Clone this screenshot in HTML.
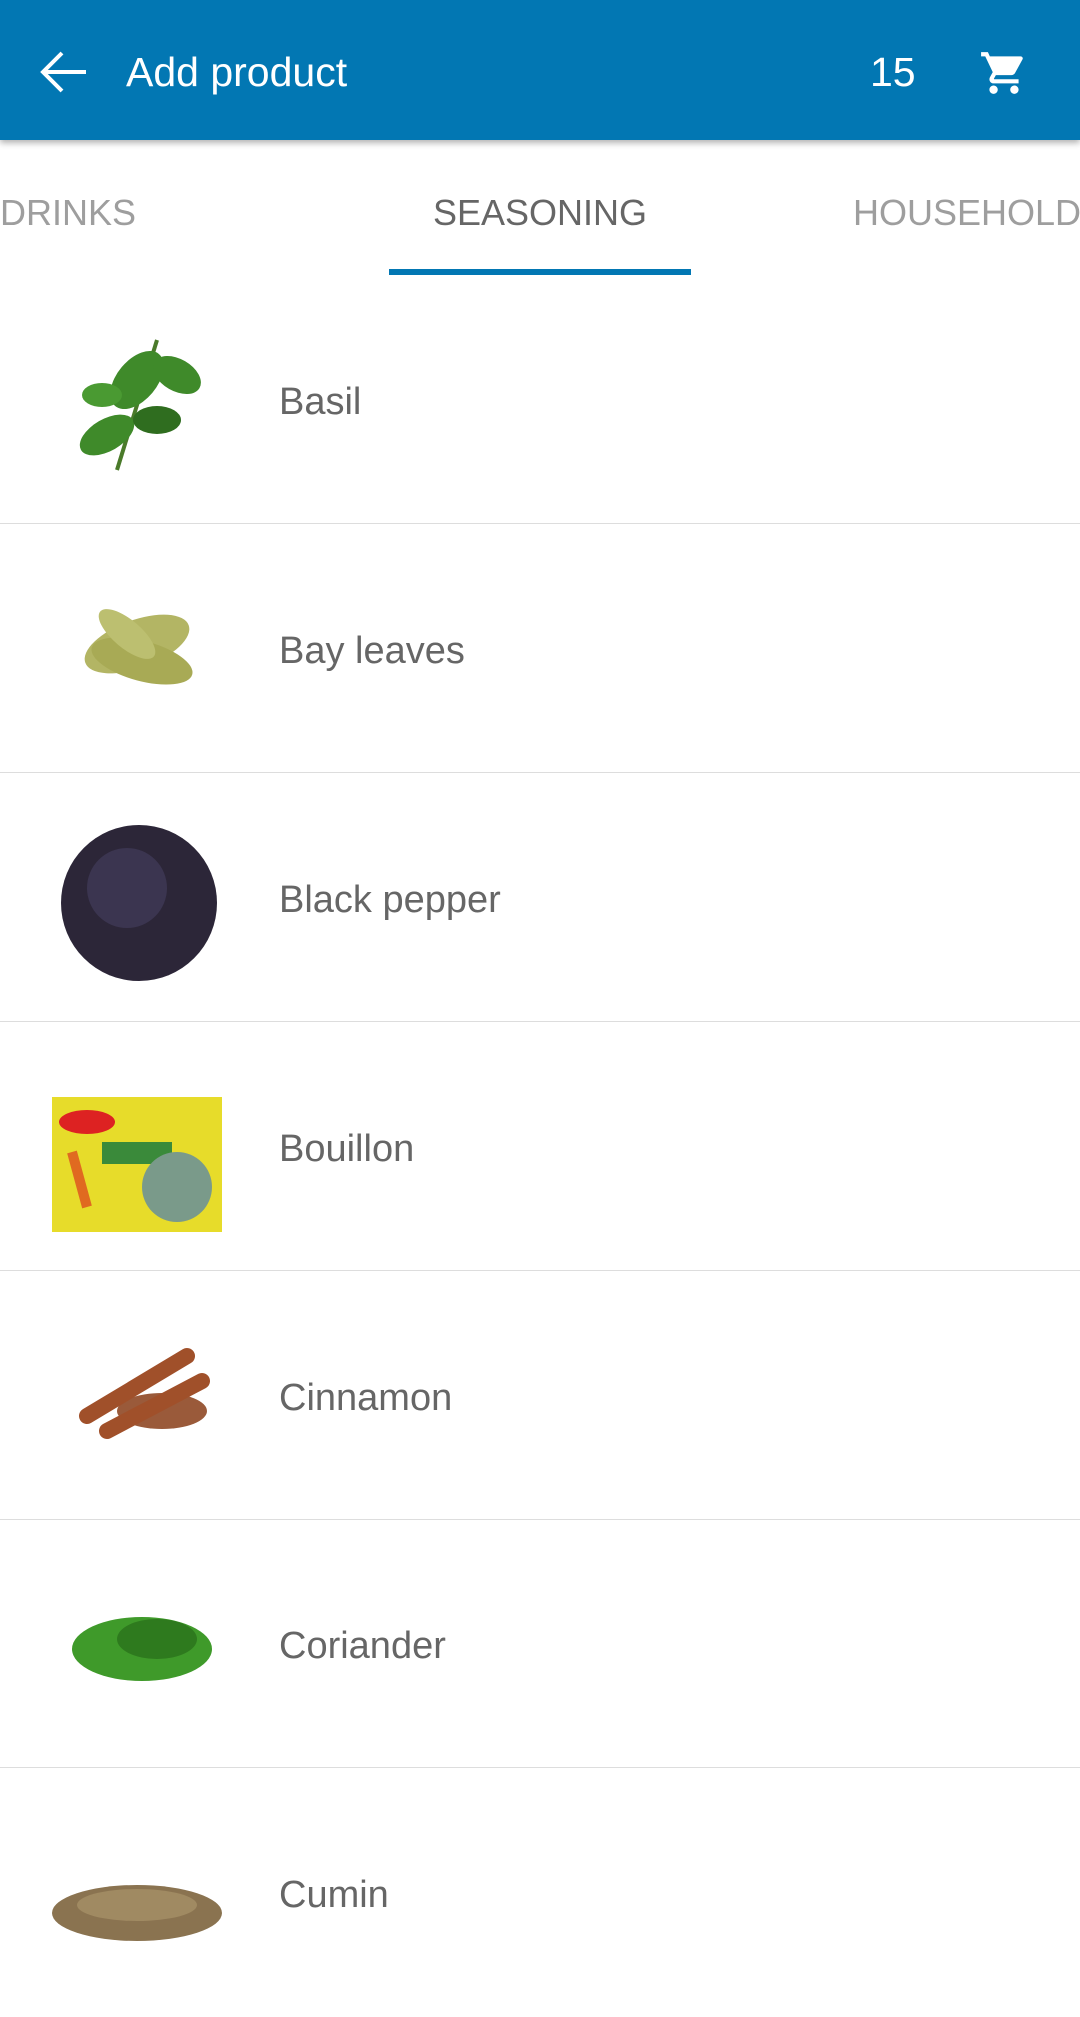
<!DOCTYPE html>
<html><head><meta charset="utf-8"><style>
*{margin:0;padding:0;box-sizing:border-box}
body{width:1080px;height:1980px;background:#fff;font-family:"Liberation Sans",sans-serif;overflow:hidden;position:relative}
.hdr{position:absolute;left:0;top:0;width:1080px;height:140px;background:#0277b3;box-shadow:0 3px 6px rgba(0,0,0,.3);z-index:2}
.hdr .t{position:absolute;left:126px;top:49px;font-size:41px;color:#fff}
.hdr .n{position:absolute;left:870px;top:49px;font-size:41px;color:#fff}
.tabs{position:absolute;top:140px;left:0;width:1080px;height:135px}
.tab{position:absolute;top:52px;font-size:36px;color:#9e9e9e}
.ind{position:absolute;left:389px;top:269px;width:302px;height:6px;background:#0277b3}
.row{position:absolute;left:0;width:1080px;height:249px;border-bottom:1px solid #ddd}
.row .l{position:absolute;left:279px;top:106px;font-size:38px;color:#666}
.row svg{position:absolute;left:47px;top:45px}
</style></head><body>
<div class="hdr">
<svg style="position:absolute;left:38px;top:50px" width="50" height="44" viewBox="0 0 50 44"><path d="M48 22H6M24 3L5 22l19 19" stroke="#fff" stroke-width="4" fill="none"/></svg>
<div class="t">Add product</div><div class="n">15</div>
<svg style="position:absolute;left:978px;top:48px" width="52" height="50" viewBox="0 0 24 24"><path fill="#fff" d="M7 18c-1.1 0-2 .9-2 2s.9 2 2 2 2-.9 2-2-.9-2-2-2zM1 2v2h2l3.6 7.59-1.35 2.45c-.16.28-.25.61-.25.96 0 1.1.9 2 2 2h12v-2H7.42c-.14 0-.25-.11-.25-.25l.03-.12.9-1.63h7.45c.75 0 1.41-.41 1.75-1.03l3.58-6.49A1 1 0 0020 4H5.21l-.94-2H1zm16 16c-1.1 0-2 .9-2 2s.9 2 2 2 2-.9 2-2-.9-2-2-2z"/></svg>
</div>
<div class="tabs">
<div class="tab" style="left:0">DRINKS</div>
<div class="tab" style="left:433px;color:#666">SEASONING</div>
<div class="tab" style="left:853px">HOUSEHOLD</div>
</div>
<div class="ind"></div>
<div class="row" style="top:275px"><svg width="180" height="170"><path d="M70 150L110 20" stroke="#4a7a2a" stroke-width="4"/><g fill="#3f8a2a"><ellipse cx="90" cy="60" rx="34" ry="20" transform="rotate(-50 90 60)"/><ellipse cx="130" cy="55" rx="26" ry="16" transform="rotate(30 130 55)"/><ellipse cx="60" cy="115" rx="30" ry="16" transform="rotate(-30 60 115)"/><ellipse cx="110" cy="100" rx="24" ry="14" fill="#2f6d1f"/><ellipse cx="55" cy="75" rx="20" ry="12" fill="#4a9a32"/></g></svg><div class="l">Basil</div></div>
<div class="row" style="top:524px"><svg width="180" height="170"><g fill="#b3b564"><ellipse cx="90" cy="75" rx="55" ry="24" transform="rotate(-20 90 75)"/><ellipse cx="95" cy="92" rx="52" ry="20" transform="rotate(15 95 92)" fill="#a8aa55"/><ellipse cx="80" cy="65" rx="35" ry="14" transform="rotate(40 80 65)" fill="#bcbf70"/></g></svg><div class="l">Bay leaves</div></div>
<div class="row" style="top:773px"><svg width="180" height="170"><circle cx="92" cy="85" r="78" fill="#2c2638"/><circle cx="80" cy="70" r="40" fill="#3b3550"/></svg><div class="l">Black pepper</div></div>
<div class="row" style="top:1022px"><svg width="180" height="170"><rect x="5" y="30" width="170" height="135" fill="#e7dc2a"/><ellipse cx="40" cy="55" rx="28" ry="12" fill="#d22"/><rect x="55" y="75" width="70" height="22" fill="#3a8a3a"/><circle cx="130" cy="120" r="35" fill="#7a9a8a"/><path d="M25 85l15 55" stroke="#e06a20" stroke-width="10"/></svg><div class="l">Bouillon</div></div>
<div class="row" style="top:1271px"><svg width="180" height="170"><ellipse cx="115" cy="95" rx="45" ry="18" fill="#9a5a3a"/><path d="M40 100L140 40M60 115L155 65" stroke="#a0502a" stroke-width="16" stroke-linecap="round"/></svg><div class="l">Cinnamon</div></div>
<div class="row" style="top:1519px"><svg width="180" height="170"><ellipse cx="95" cy="85" rx="70" ry="32" fill="#3f9a2a"/><ellipse cx="110" cy="75" rx="40" ry="20" fill="#2e7a1e"/></svg><div class="l">Coriander</div></div>
<div class="row" style="top:1768px;border:none"><svg width="190" height="170"><ellipse cx="90" cy="100" rx="85" ry="28" fill="#8a7350"/><ellipse cx="90" cy="92" rx="60" ry="16" fill="#a08a62"/></svg><div class="l">Cumin</div></div>
</body></html>
